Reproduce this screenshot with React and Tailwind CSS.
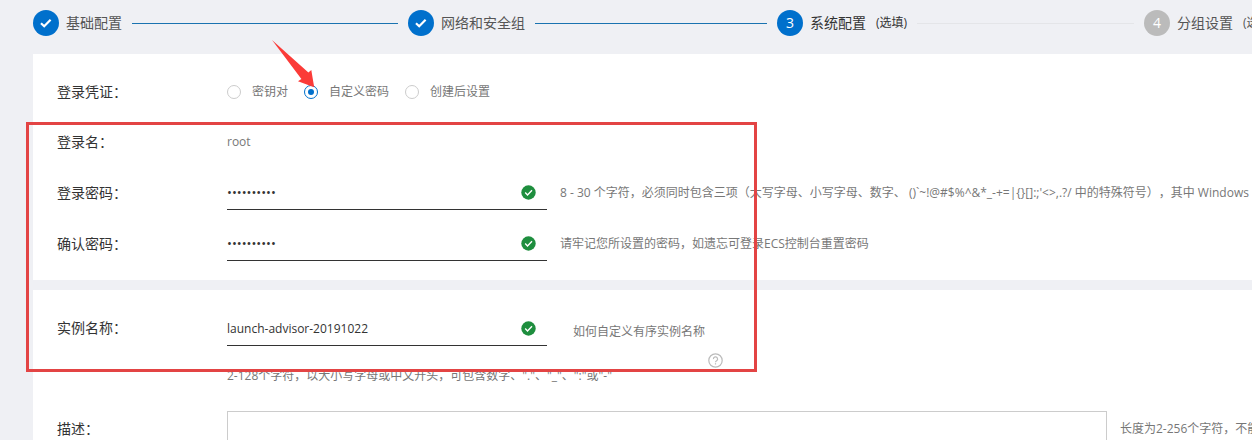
import React, { useState } from "react";

const STEPS = [
  { n: 1, title: "基础配置", state: "done" },
  { n: 2, title: "网络和安全组", state: "done" },
  { n: 3, title: "系统配置", note: "(选填)", state: "current" },
  { n: 4, title: "分组设置", note: "(选填)", state: "todo" },
];

const CREDENTIALS = ["密钥对", "自定义密码", "创建后设置"];

function Step({ step, last }) {
  const reached = step.state !== "todo";
  return (
    <li className="flex min-w-0 items-center whitespace-nowrap">
      <span
        className={
          "flex size-[26px] shrink-0 items-center justify-center rounded-full text-sm text-white " +
          (reached ? "bg-[#0070cc]" : "bg-[#bbbbbb]")
        }
      >
        {step.state === "done" ? (
          <svg viewBox="0 0 26 26" className="size-[26px]" fill="none" stroke="currentColor" strokeWidth="2.2" aria-hidden="true">
            <path d="M8 13.2 11.2 16.2 17.6 9.8" />
          </svg>
        ) : (
          step.n
        )}
      </span>
      <span className={"ml-[7px] shrink-0 text-sm " + (step.state === "current" ? "text-[#333]" : "text-[#555]")}>
        {step.title}
      </span>
      {step.note && (
        <span className={"ml-[10px] shrink-0 text-xs " + (step.state === "current" ? "text-[#333]" : "text-[#555]")}>
          {step.note}
        </span>
      )}
      {!last && (
        <span
          className={
            "mx-[10px] h-px min-w-4 flex-1 " + (step.state === "done" ? "bg-[#1a73b0]" : "bg-[#e4e5e8]")
          }
        />
      )}
    </li>
  );
}

function ValidMark() {
  return (
    <svg viewBox="0 0 15 15" className="pointer-events-none absolute top-[10px] right-[11px] size-[15px]" aria-hidden="true">
      <circle cx="7.5" cy="7.5" r="7.2" fill="#1e8e3e" />
      <path d="M4.2 7.6 6.5 9.9 11 5.2" fill="none" stroke="#fff" strokeWidth="1.4" />
    </svg>
  );
}

function LineInput({ id, type = "text", initial }) {
  const [value, setValue] = useState(initial);
  return (
    <div className="relative w-[320px] shrink-0">
      <input
        id={id}
        type={type}
        value={value}
        onChange={(e) => setValue(e.target.value)}
        className={
          "block h-[35px] w-full border-b border-[#333] bg-transparent pr-8 text-[#333] outline-none " +
          (type === "password" ? "text-[13px]" : "text-xs")
        }
      />
      <ValidMark />
    </div>
  );
}

const labelClass = "w-[170px] shrink-0 text-sm text-[#333]";
const hintClass = "ml-[13px] whitespace-nowrap text-xs text-[#777]";

export default function App() {
  const [credential, setCredential] = useState(1);
  const [description, setDescription] = useState("");

  return (
    <div className="relative h-screen overflow-hidden bg-[#eff0f4] pl-[33px] font-['Open_Sans','Noto_Sans_CJK_SC',sans-serif] [text-spacing-trim:space-all]">
      <ol className="grid h-[54px] grid-cols-[375fr_369fr_367fr_108fr] pb-2">
        {STEPS.map((s, i) => (
          <Step key={s.n} step={s} last={i === STEPS.length - 1} />
        ))}
      </ol>

      <form>
        <section className="bg-white pt-[13px] pb-[11px] pl-6">
          <fieldset className="flex h-[50px] items-center" aria-labelledby="cred-label">
            <span id="cred-label" className={labelClass}>登录凭证：</span>
            <div className="flex gap-4">
              {CREDENTIALS.map((name, i) => (
                <label key={name} className="flex items-center gap-[11px] text-xs text-[#777]">
                  <input
                    type="radio"
                    name="credential"
                    checked={credential === i}
                    onChange={() => setCredential(i)}
                    className="flex size-[14px] appearance-none items-center justify-center rounded-full border border-[#ccc] bg-white before:size-[6px] before:rounded-full checked:border-[#0070cc] checked:before:bg-[#0070cc]"
                  />
                  {name}
                </label>
              ))}
            </div>
          </fieldset>

          <div className="flex h-[50px] items-center">
            <span className={labelClass}>登录名：</span>
            <span className="text-xs text-[#777]">root</span>
          </div>

          <div className="flex h-[51px] items-center">
            <label htmlFor="password" className={labelClass}>登录密码：</label>
            <LineInput id="password" type="password" initial="Passw0rd!1" />
            <p className={hintClass}>
              {"8 - 30 个字符，必须同时包含三项（大写字母、小写字母、数字、 ()`~!@#$%^&*_-+=|{}[]:;'<>,.?/ 中的特殊符号），其中 Windows 实例不能以斜线号（/）为首字符"}
            </p>
          </div>

          <div className="flex h-[51px] items-center">
            <label htmlFor="confirm" className={labelClass}>确认密码：</label>
            <LineInput id="confirm" type="password" initial="Passw0rd!1" />
            <p className={hintClass}>请牢记您所设置的密码，如遗忘可登录ECS控制台重置密码</p>
          </div>
        </section>

        <section className="mt-[10px] bg-white pt-[21px] pb-6 pl-6">
          <div className="flex items-start">
            <label htmlFor="instance" className={labelClass + " leading-[34px]"}>实例名称：</label>
            <LineInput id="instance" initial="launch-advisor-20191022" />
            <div className="ml-[26px] flex flex-col items-end pt-3 whitespace-nowrap text-xs text-[#777]">
              <a href="#naming" className="mr-[18px] leading-[18px]">如何自定义有序实例名称</a>
              <button type="button" aria-label="帮助" className="mt-3 text-[#bbb]">
                <svg viewBox="0 0 15 15" className="block size-[15px]" fill="none" stroke="currentColor" strokeWidth="1.2" aria-hidden="true">
                  <circle cx="7.5" cy="7.5" r="6.7" />
                  <path d="M5.4 6.1a2.1 2.1 0 1 1 3.2 1.7c-.7.5-1.1.8-1.1 1.5" />
                  <path d="M7.5 10.2v1.3" />
                </svg>
              </button>
            </div>
          </div>
          <p className="ml-[170px] text-xs leading-4 text-[#777]">
            2-128个字符，以大小写字母或中文开头，可包含数字、"."、"_"、":"或"-"
          </p>

          <div className="mt-[27px] flex items-start">
            <label htmlFor="description" className={labelClass + " pt-2 leading-5"}>描述：</label>
            <textarea
              id="description"
              value={description}
              onChange={(e) => setDescription(e.target.value)}
              className="h-24 w-[880px] shrink-0 resize-none border border-[#ccc] bg-white p-2 text-xs text-[#333] outline-none"
            />
            <p className={hintClass + " pt-2 leading-5"}>长度为2-256个字符，不能以http://或https://开头</p>
          </div>
        </section>
      </form>

      <div className="pointer-events-none absolute top-[122px] left-[26px] h-[250px] w-[731px] border-3 border-[#e34444]" />
      <svg viewBox="0 0 44 49" className="pointer-events-none absolute top-[39px] left-[271px] h-[49px] w-[44px]" aria-hidden="true">
        <path d="M1 1 37.4 33.4 40.3 31 43.2 48.3 27 42.2 30.4 40Z" fill="#fb3b38" />
      </svg>
    </div>
  );
}
